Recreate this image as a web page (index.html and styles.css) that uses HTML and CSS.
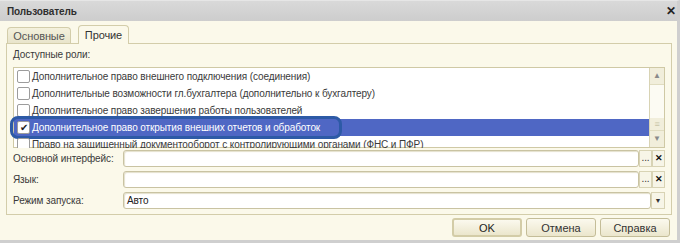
FILE: index.html
```html
<!DOCTYPE html>
<html lang="ru">
<head>
  <meta charset="UTF-8">
  <title>Пользователь</title>
  <link rel="stylesheet" href="styles.css">
</head>
<body>
  <div class="window">
    <div class="titlebar">
      <span class="title">Пользователь</span>
      <span class="close">&#x2715;</span>
    </div>
    <div class="body">
      <div class="tabs">
        <div class="tab">Основные</div>
        <div class="tab active">Прочие</div>
      </div>
      <div class="panel">
        <div class="caption">Доступные роли:</div>
        <div class="list">
          <div class="rows">
            <div class="row"><span class="item"><span class="check"></span>Дополнительное право внешнего подключения (соединения)</span></div>
            <div class="row"><span class="item"><span class="check"></span>Дополнительные возможности гл.бухгалтера (дополнительно к бухгалтеру)</span></div>
            <div class="row"><span class="item"><span class="check"></span>Дополнительное право завершения работы пользователей</span></div>
            <div class="row selected"><span class="item"><span class="check on">&#x2714;</span>Дополнительное право открытия внешних отчетов и обработок</span></div>
            <div class="row"><span class="item"><span class="check"></span>Право на защищенный документооборот с контролирующими органами (ФНС и ПФР)</span></div>
          </div>
          <div class="scroll">
            <div class="sbtn">&#x25B2;</div>
            <div class="track"></div>
            <div class="thumb">&#x2261;</div>
            <div class="sbtn">&#x25BC;</div>
          </div>
        </div>
        <div class="field">
          <label>Основной интерфейс:</label>
          <div class="input"></div>
          <span class="fbtn">...</span>
          <span class="fbtn x">&#x2715;</span>
        </div>
        <div class="field">
          <label>Язык:</label>
          <div class="input"></div>
          <span class="fbtn">...</span>
          <span class="fbtn x">&#x2715;</span>
        </div>
        <div class="field">
          <label>Режим запуска:</label>
          <div class="input">Авто</div>
          <span class="fbtn drop">&#x25BC;</span>
        </div>
      </div>
      <div class="buttons">
        <button class="default">OK</button>
        <button>Отмена</button>
        <button>Справка</button>
      </div>
    </div>
  </div>
</body>
</html>
```

FILE: styles.css
```css
body {
  margin: 0;
  font-family: 'Liberation Sans', Arial, sans-serif;
  font-size: 10px;
  letter-spacing: -0.1px;
  color: #3a3a3a;
  background-color: #fff;
}

.window {
  width: 680px;
  height: 243px;
  box-sizing: border-box;
  border-right: 3px solid #cfcfcf;
  border-bottom: 3px solid #cfcfcf;
  border-top: 1px solid #e6e6e6;
  display: flex;
  flex-direction: column;
}

.titlebar {
  height: 20px;
  background: linear-gradient(#d9d9d9, #cdcdcd);
  display: flex;
  align-items: center;
  justify-content: space-between;
  padding: 0 1px 0 7px;
}

.title {
  font-weight: bold;
  color: #2e2e2e;
}

.close {
  font-weight: bold;
  font-size: 12px;
  color: #222;
}

.body {
  flex: 1;
  background-color: #fbf9ea;
  padding: 4px 5px 0 6px;
}

.tabs {
  display: flex;
  align-items: flex-end;
  gap: 7px;
  height: 18px;
  padding-left: 1px;
}

.tab {
  height: 15px;
  width: 62px;
  box-sizing: content-box;
  border: 1px solid #d3cdaa;
  border-bottom: none;
  border-radius: 4px 4px 0 0;
  background: linear-gradient(#f4f1dd, #e8e4cb);
  line-height: 16px;
  text-align: center;
  font-size: 11px;
  color: #555;
}

.tab.active {
  height: 18px;
  width: 49px;
  line-height: 19px;
  background: #fbf9ea;
  position: relative;
  margin-bottom: -1px;
  color: #333;
}

.panel {
  border: 1px solid #d3cdaa;
  height: 172px;
  box-sizing: border-box;
  padding: 4px 6px 0 6px;
}

.caption {
  height: 19px;
  line-height: 14px;
}

.list {
  display: flex;
  height: 81px;
  box-sizing: border-box;
  border: 1px solid #cfc9a5;
  background: #fff;
  clip-path: inset(-6px -6px 0 -8px);
}

.rows {
  flex: 1;
}

.row {
  height: 17px;
  display: flex;
  align-items: center;
  white-space: nowrap;
}

.item {
  display: flex;
  align-items: center;
  height: 15px;
  padding-left: 3px;
  padding-right: 18px;
}

.check {
  width: 11px;
  height: 11px;
  border: 1px solid #9c9c9c;
  border-radius: 2px;
  background: #fff;
  margin-right: 2px;
  font-size: 10px;
  line-height: 11px;
  text-align: center;
  color: #222;
}

.row.selected {
  background-color: #4f67c4;
  color: #fff;
}

.row.selected .item {
  outline: 3px solid #2d5aa6;
  outline-offset: 1px;
  border-radius: 4px;
}

.scroll {
  width: 14px;
  border-left: 1px solid #d8d3b4;
  display: flex;
  flex-direction: column;
  background: #f8f6e8;
}

.sbtn {
  height: 16px;
  font-size: 8px;
  line-height: 16px;
  text-align: center;
  color: #8a8a8a;
  background: #f1eedb;
  border-bottom: 1px solid #e0dcc0;
}

.sbtn:last-child {
  border-bottom: none;
  border-top: 1px solid #e0dcc0;
}

.track {
  flex: 1;
  background: #fcfbf3;
}

.thumb {
  height: 12px;
  font-size: 9px;
  line-height: 12px;
  text-align: center;
  color: #c8c4a8;
  background: #f1eedb;
}

.field {
  display: flex;
  align-items: center;
  height: 21px;
}

.field:first-of-type {
  margin-top: 4px;
}

.field label {
  width: 110px;
  flex-shrink: 0;
  white-space: nowrap;
}

.input {
  flex: 1;
  height: 15px;
  border: 1px solid #c9c3a2;
  border-radius: 3px;
  background: #fff;
  box-shadow: inset 1px 1px 1px #e4e0cc;
  padding-left: 3px;
  line-height: 15px;
  color: #222;
}

.fbtn {
  width: 13px;
  height: 17px;
  box-sizing: border-box;
  border: 1px solid #d8d3b4;
  background: #f7f5e7;
  text-align: center;
  line-height: 13px;
  font-size: 10px;
  color: #333;
}

.fbtn.x {
  font-weight: bold;
  line-height: 15px;
  font-size: 9px;
  color: #111;
}

.fbtn.drop {
  width: 14px;
  font-size: 7px;
  line-height: 15px;
}

.buttons {
  display: flex;
  justify-content: flex-end;
  gap: 4px;
  padding-top: 3px;
  padding-right: 2px;
}

button {
  font-family: 'Liberation Sans', Arial, sans-serif;
  font-size: 11px;
  color: #333;
  width: 70px;
  height: 19px;
  padding: 0;
  border: 1px solid #c4bd98;
  border-radius: 3px;
  background: linear-gradient(#fbf9ee, #ebe6cc);
}

button.default {
  border: 2px solid #d3cca7;
  color: #222;
}
```
